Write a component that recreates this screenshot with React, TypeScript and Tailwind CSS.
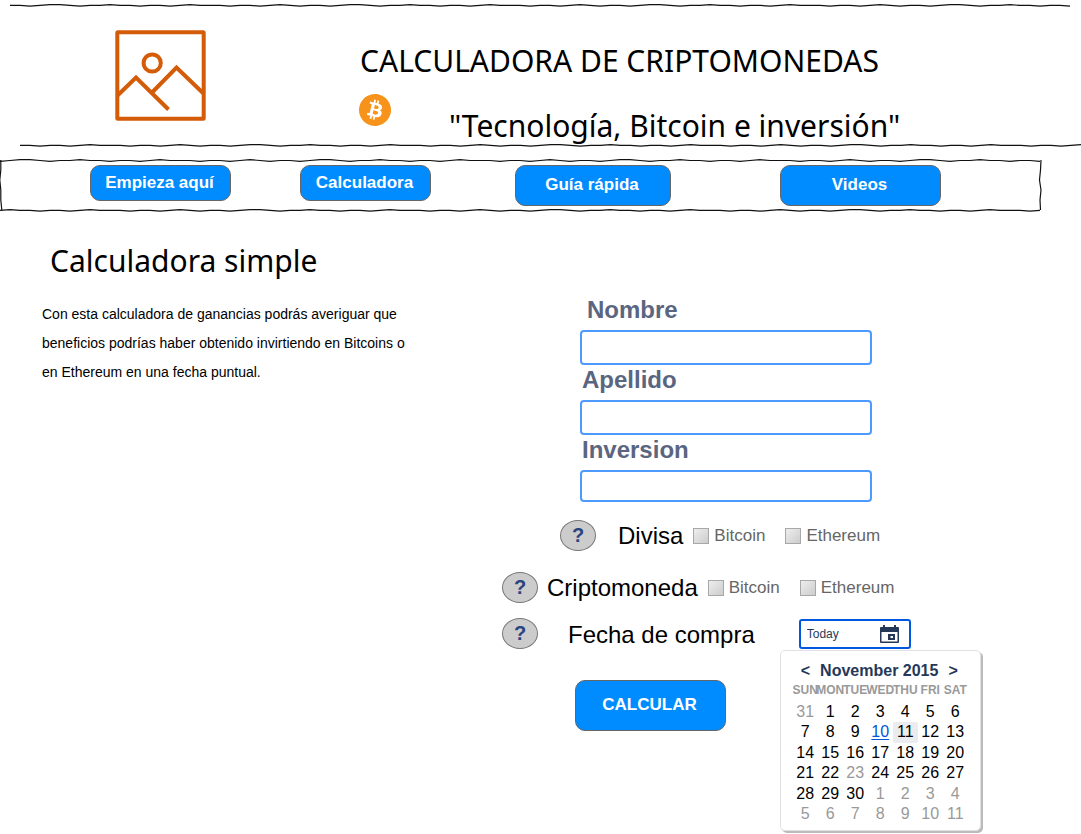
import React, { useId } from "react";
import { SiBitcoin } from "react-icons/si";

const WOBBLE = [0, 0, 1, 0, -1, -1, 0, 1, 0, 0, -1, 0, 0, 1, 0, 0, 1, 0, -1, 0, 0, 0, 1, 0, 0, 1, 0, -1, 0, 1];

function sketchPoints(length: number, seed: number) {
  const points: [number, number][] = [];
  for (let d = 0; d <= length; d += 10) {
    points.push([d, WOBBLE[(d / 10 + seed) % WOBBLE.length]]);
  }
  return points;
}

function horizontal(length: number, y: number, seed: number) {
  return "M" + sketchPoints(length, seed).map(([d, w]) => `${d} ${y + w * 0.8}`).join("L");
}

function vertical(length: number, x: number, y: number, seed: number) {
  return "M" + sketchPoints(length, seed).map(([d, w]) => `${x + w} ${y + d}`).join("L");
}

function SketchLine({ seed }: { seed: number }) {
  return (
    <svg className="block h-[6px] w-full" viewBox="0 0 1060 6" preserveAspectRatio="none" aria-hidden="true">
      <path d={horizontal(1060, 3.4, seed)} fill="none" stroke="#111" strokeWidth="1.2" />
    </svg>
  );
}

function SketchFrame() {
  return (
    <svg
      className="pointer-events-none absolute inset-0 h-full w-full"
      viewBox="0 0 1042 53"
      preserveAspectRatio="none"
      aria-hidden="true"
    >
      <g fill="none" stroke="#111" strokeWidth="1.2">
        <path d={horizontal(1041, 1.5, 2)} />
        <path d={horizontal(1041, 51.4, 9)} />
        <path d={vertical(50, 0.8, 1, 8)} />
        <path d="M1041 1L1040.500 11L1039.500 21L1041 31L1040 41L1040.500 51" />
      </g>
    </svg>
  );
}

function PictureIcon() {
  return (
    <svg className="block h-[91px] w-[91px] shrink-0" viewBox="0 0 91 91" fill="none" stroke="#d45b07" strokeWidth="4" aria-hidden="true">
      <rect x="2.300" y="2.300" width="86.400" height="86.400" rx="0.500" />
      <circle cx="37.200" cy="33" r="8.600" />
      <path d="M2.500 65.500L21 47.500L53.500 79.500" />
      <path d="M37 62.500L61.500 37.500L88.500 63.500" />
    </svg>
  );
}

function CalendarIcon() {
  return (
    <svg className="block h-[18px] w-[19px]" viewBox="0 0 19 18" fill="#253858" aria-hidden="true">
      <path fillRule="evenodd" d="M1 2H3V0H5V2H14V0H16V2H18Q19 2 19 3V17Q19 18 18 18H1Q0 18 0 17V3Q0 2 1 2ZM1.500 7V16.500H17.500V7Z" />
      <path fillRule="evenodd" d="M8 9H15V15H8ZM10.500 11V13H13V11Z" />
    </svg>
  );
}

const NAV = [
  { label: "Empieza aquí", box: "h-9 w-[141px]" },
  { label: "Calculadora", box: "ml-[69px] h-9 w-[131px]" },
  { label: "Guía rápida", box: "ml-[84px] h-[41px] w-[156px] pb-[2px]" },
  { label: "Videos", box: "ml-[109px] h-[41px] w-[161px] pb-[2px]" },
];

function BlueButton({ className, children }: { className: string; children: React.ReactNode }) {
  return (
    <button
      type="button"
      className={`rounded-[10px] border border-[#666] bg-[#008cff] pr-[2px] text-center text-[17px] leading-5 font-bold text-white ${className}`}
    >
      {children}
    </button>
  );
}

function Field({ label, indent, box }: { label: string; indent: string; box: string }) {
  const id = useId();
  return (
    <div className="flex w-[292px] flex-col">
      <label htmlFor={id} className={`h-[35px] text-2xl leading-[30px] font-bold text-[#5a6680] ${indent}`}>
        {label}
      </label>
      <input id={id} type="text" className={`w-full rounded-[4px] border-2 border-[#4c9aff] px-2 outline-none ${box}`} />
    </div>
  );
}

function Help({ topic }: { topic: string }) {
  return (
    <button
      type="button"
      aria-label={`Ayuda: ${topic}`}
      className="h-[31px] w-9 shrink-0 rounded-[50%] border border-[#777] bg-[#ccc] text-center text-xl leading-[29px] font-bold text-[#2a4480]"
    >
      ?
    </button>
  );
}

function Option({ label }: { label: string }) {
  return (
    <label className="flex items-center gap-[5px] text-[17px] leading-5 text-[#666]">
      <input
        type="checkbox"
        className="h-4 w-4 appearance-none border border-[#a8a8a8] bg-linear-to-br from-[#eee] to-[#ccc]"
      />
      {label}
    </label>
  );
}

function Choice({ title, offset, gap }: { title: string; offset: string; gap: string }) {
  return (
    <fieldset className={`flex h-[31px] items-center ${offset}`}>
      <Help topic={title} />
      <span className={`mr-[10px] text-2xl leading-[30px] ${gap}`}>{title}</span>
      <div className="flex gap-5">
        <Option label="Bitcoin" />
        <Option label="Ethereum" />
      </div>
    </fieldset>
  );
}

const WEEKDAYS = ["SUN", "MON", "TUE", "WED", "THU", "FRI", "SAT"];
const WEEKS = [
  [31, 1, 2, 3, 4, 5, 6],
  [7, 8, 9, 10, 11, 12, 13],
  [14, 15, 16, 17, 18, 19, 20],
  [21, 22, 23, 24, 25, 26, 27],
  [28, 29, 30, 1, 2, 3, 4],
  [5, 6, 7, 8, 9, 10, 11],
];

function dayStyle(week: number, day: number) {
  if (week === 1 && day === 10) return "text-[#0057d8] underline underline-offset-2";
  if (week === 1 && day === 11) return "rounded-[2px] bg-[#ebecf0]";
  const muted = (week === 0 && day === 31) || day === 23 || (week === 4 && day < 5) || week === 5;
  return muted ? "text-[#999]" : "";
}

function Calendar() {
  return (
    <div className="absolute top-[29px] -left-[21px] w-[201px] rounded-[5px] border border-[#dfe1e5] bg-white px-3 pt-[10px] pb-[5px] shadow-[2px_2px_0_#bbb]">
      <div className="flex h-5 items-center gap-[10px] pl-2 text-base leading-5 font-bold text-[#253858]">
        <button type="button" aria-label="Mes anterior">&lt;</button>
        <span>November 2015</span>
        <button type="button" aria-label="Mes siguiente">&gt;</button>
      </div>
      <table className="h-[144px] w-[175px] table-fixed border-collapse text-center">
        <thead>
          <tr className="h-[21px] align-top text-xs leading-4 text-[#999]">
            {WEEKDAYS.map((day) => (
              <th key={day} className="p-0 pt-px">
                <span className="flex justify-center">{day}</span>
              </th>
            ))}
          </tr>
        </thead>
        <tbody className="text-base leading-5 text-black">
          {WEEKS.map((week, w) => (
            <tr key={w}>
              {week.map((day) => (
                <td key={day} className={`p-0 ${dayStyle(w, day)}`}>
                  {day}
                </td>
              ))}
            </tr>
          ))}
        </tbody>
      </table>
    </div>
  );
}

export default function App() {
  return (
    <div className="min-h-screen bg-white font-['Liberation_Sans',Arial,sans-serif] text-black">
      <header>
        <div className="mr-[11px] ml-[10px] pt-[2px]">
          <SketchLine seed={0} />
        </div>
        <div className="flex items-start pt-[22px] pl-[115px]">
          <PictureIcon />
          <div className="ml-[153px] pt-[15px] font-['Noto_Sans',sans-serif] text-[30px] leading-8">
            <h1 className="pl-px">CALCULADORA DE CRIPTOMONEDAS</h1>
            <div className="flex items-start pt-[17px]">
              <SiBitcoin className="h-8 w-8 text-[#f7931a]" />
              <p className="mt-4 ml-[58px]">"Tecnología, Bitcoin e inversión"</p>
            </div>
          </div>
        </div>
        <div className="ml-5">
          <SketchLine seed={11} />
        </div>
      </header>

      <nav className="relative mt-[11px] mr-[39px] flex h-[53px] items-start pt-[6px] pl-[90px]">
        <SketchFrame />
        {NAV.map((item) => (
          <BlueButton key={item.label} className={item.box}>
            {item.label}
          </BlueButton>
        ))}
      </nav>

      <main className="flex items-start">
        <section className="w-[502px] shrink-0 pt-[33px] pl-[42px]">
          <h2 className="pl-2 font-['Noto_Sans',sans-serif] text-[30px] leading-8">Calculadora simple</h2>
          <p className="mt-[23px] w-[380px] text-sm leading-[29px]">
            Con esta calculadora de ganancias podrás averiguar que beneficios podrías haber obtenido invirtiendo en
            Bitcoins o en Ethereum en una fecha puntual.
          </p>
        </section>

        <form className="flex-1 pt-[83px]">
          <div className="ml-[78px] flex flex-col">
            <Field label="Nombre" indent="pl-[7px]" box="h-[35px]" />
            <Field label="Apellido" indent="pl-[2px]" box="h-[35px]" />
            <Field label="Inversion" indent="pl-[2px]" box="h-8" />
          </div>
          <div className="mt-[18px] flex flex-col gap-[21px]">
            <Choice title="Divisa" offset="ml-[58px]" gap="ml-[22px]" />
            <Choice title="Criptomoneda" offset="" gap="ml-[9px]" />
          </div>
          <div className="mt-[15px] flex h-[31px] items-center">
            <Help topic="Fecha de compra" />
            <label htmlFor="purchase-date" className="ml-[30px] pt-[2px] text-2xl leading-[30px]">
              Fecha de compra
            </label>
            <div className="relative ml-[44px] flex h-[30px] w-[112px] items-center rounded-[3px] border-2 border-[#0058e0] bg-white">
              <input
                id="purchase-date"
                type="text"
                defaultValue="Today"
                className="w-[79px] pl-[6px] text-xs leading-4 text-[#253858] outline-none"
              />
              <CalendarIcon />
              <Calendar />
            </div>
          </div>
          <BlueButton className="mt-[31px] ml-[73px] h-[51px] w-[151px] pb-[2px]">CALCULAR</BlueButton>
        </form>
      </main>
    </div>
  );
}
